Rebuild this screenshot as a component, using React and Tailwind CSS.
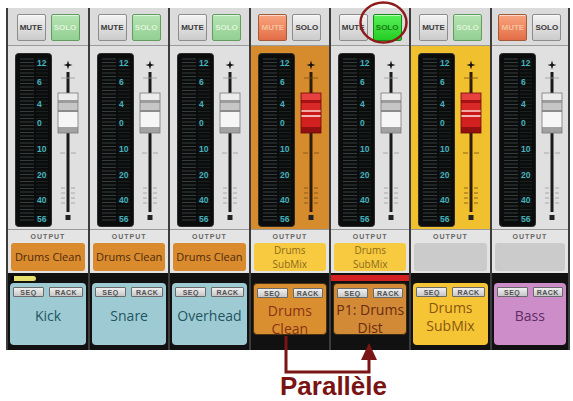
import React from "react";

const channels = [
  { mute: "off", solo: "light", body: "gray", knob: "white", out: "orange", outText: ["Drums Clean"], box: "blue", name: ["Kick"], band: "yellow", nameMt: "mt-[10px]", short: false, first: true },
  { mute: "off", solo: "light", body: "gray", knob: "white", out: "orange", outText: ["Drums Clean"], box: "blue", name: ["Snare"], band: "none", nameMt: "mt-[10px]", short: false },
  { mute: "off", solo: "light", body: "gray", knob: "white", out: "orange", outText: ["Drums Clean"], box: "blue", name: ["Overhead"], band: "none", nameMt: "mt-[10px]", short: false },
  { mute: "on", solo: "off", body: "orange", knob: "red", out: "yellow", outText: ["Drums", "SubMix"], box: "orange", name: ["Drums", "Clean"], band: "none", nameMt: "mt-[4px]", short: true },
  { mute: "off", solo: "on", body: "gray", knob: "white", out: "yellow", outText: ["Drums", "SubMix"], box: "orange2", name: ["P1: Drums", "Dist"], band: "red", nameMt: "mt-[3px]", short: true },
  { mute: "off", solo: "light", body: "yellow", knob: "red", out: "gray", outText: [], box: "yellow", name: ["Drums", "SubMix"], band: "none", nameMt: "mt-[2px]", short: false },
  { mute: "on", solo: "off", body: "gray", knob: "white", out: "gray", outText: [], box: "pink", name: ["Bass"], band: "none", nameMt: "mt-[10px]", short: false, last: true },
];

const BTN =
  "w-[29px] h-[27px] rounded-[2px] border flex items-center justify-center text-[8px] font-bold leading-none shadow-[inset_0_1px_0_rgba(255,255,255,0.6)]";

const muteCls = {
  off: "bg-linear-to-b from-[#f3f3f3] to-[#cbcbcb] border-[#8c8c8c] text-[#3a3a3a]",
  on: "bg-linear-to-b from-[#f7a47f] to-[#e36d46] border-[#a55a3a] text-[#f6c39c]",
};
const soloCls = {
  off: "bg-linear-to-b from-[#f3f3f3] to-[#cbcbcb] border-[#8c8c8c] text-[#3a3a3a]",
  light: "bg-linear-to-b from-[#b6e4b3] to-[#92cf92] border-[#5f9e5f] text-[#e0f4da]",
  on: "bg-linear-to-b from-[#55f255] to-[#22cc22] border-[#168a16] text-[#167a16]",
};
const bodyCls = {
  gray: "bg-[#e0e0e0]",
  orange: "bg-[#d68b2c]",
  yellow: "bg-[#f1c02e]",
};
const outCls = {
  orange: "bg-[#d98b2d] text-[#4e2a0e]",
  yellow: "bg-[#f7ca40] text-[#8d6a1a]",
  gray: "bg-[#cbcbcb]",
};
const boxCls = {
  blue: "bg-[#9ecbd3] text-[#1f5561] h-[62px]",
  orange: "bg-[#d98f30] text-[#8b3212] h-[52px] border border-[#4a3214]",
  orange2: "bg-[#d38a36] text-[#6b2a10] h-[52px] border border-[#3a2a14]",
  yellow: "bg-[#f5c535] text-[#8a5610] h-[62px]",
  pink: "bg-[#cd8dc9] text-[#5f2c63] h-[62px]",
};

function Meter() {
  const labels = [
    [10, "12"],
    [29, "6"],
    [51, "4"],
    [70, "0"],
    [96, "10"],
    [122, "20"],
    [147, "40"],
    [166, "56"],
  ];
  const segs = [];
  for (let y = 6; y < 170; y += 3.5) segs.push(y);
  return (
    <svg width="37" height="174" viewBox="0 0 37 174" className="shrink-0">
      <rect x="0.5" y="0.5" width="36" height="173" rx="3" fill="#0b0d0d" stroke="#2c2c2c" />
      {segs.map((y, i) => (
        <line key={"a" + i} x1="5" x2="19" y1={y} y2={y} stroke="#373c3d" strokeWidth="1" />
      ))}
      {segs.map((y, i) => (
        <line key={"b" + i} x1="21" x2="33" y1={y} y2={y} stroke="#1b2122" strokeWidth="1" />
      ))}
      {labels.map(([y, t]) => (
        <text key={t} x="22" y={y + 3} fontSize="8.5" fill="#46b2bd" fontFamily="Liberation Sans" fontWeight="bold">
          {t}
        </text>
      ))}
    </svg>
  );
}

function Fader({ knob, body }) {
  const track = body === "gray" ? "#1a1a1a" : "#2e1c08";
  const tick = body === "gray" ? "#9a9a9a" : "#7a4e16";
  const white = [
    [40, 7, "#ececec"],
    [47, 3, "#9c9c9c"],
    [50, 7, "#c6c6c6"],
    [57, 2, "#8c8c8c"],
    [59, 15, "#f6f6f6"],
    [74, 6, "#a2a2a2"],
  ];
  const red = [
    [40, 7, "#e64040"],
    [47, 3, "#a51212"],
    [50, 7, "#d82828"],
    [57, 2, "#f3a8a8"],
    [59, 3, "#c81818"],
    [62, 2, "#f5b5b5"],
    [64, 10, "#d02020"],
    [74, 6, "#931010"],
  ];
  const parts = knob === "red" ? red : white;
  return (
    <svg width="27" height="174" viewBox="0 0 27 174" className="shrink-0">
      <path d="M13 7.5 L14 11 L17.5 12 L14 13 L13 16.5 L12 13 L8.5 12 L12 11 Z" fill="#111" />
      <line x1="13" x2="13" y1="19" y2="159" stroke={track} strokeWidth="3" />
      <line x1="6" x2="20" y1="25" y2="25" stroke={tick} strokeWidth="0.8" />
      <line x1="5" x2="10" y1="100" y2="100" stroke={tick} strokeWidth="0.8" />
      <line x1="16" x2="21" y1="100" y2="100" stroke={tick} strokeWidth="0.8" />
      {[135, 140, 145, 150].map((y) => (
        <g key={y}>
          <line x1="6" x2="10" y1={y} y2={y} stroke={tick} strokeWidth="0.8" />
          <line x1="16" x2="20" y1={y} y2={y} stroke={tick} strokeWidth="0.8" />
        </g>
      ))}
      <rect x="10.5" y="162" width="5" height="5" fill="#222" />
      {parts.map(([y, h, c], i) => (
        <rect key={i} x="3" y={y} width="20" height={h} fill={c} />
      ))}
      <rect x="3" y="40" width="20" height="40" fill="none" stroke={knob === "red" ? "#6a0a0a" : "#7a7a7a"} strokeWidth="0.8" />
    </svg>
  );
}

function Channel({ c }) {
  return (
    <div className={`flex flex-col border-l-2 border-[#3c3c3c] ${c.last ? "border-r-2" : ""}`}>
      <div className="h-[37px] bg-[#dbdbdb] flex justify-center gap-[5px] pt-[6px]">
        <div className={`${BTN} ${muteCls[c.mute]}`}>MUTE</div>
        <div className={`${BTN} ${soloCls[c.solo]}`}>SOLO</div>
      </div>
      <div className="h-px bg-[#9a9a9a]" />
      <div className={`h-[183px] ${bodyCls[c.body]} flex pl-[7px] pt-[7px] gap-[3px]`}>
        <Meter />
        <Fader knob={c.knob} body={c.body} />
      </div>
      <div className="h-px bg-[#9a9a9a]" />
      <div className="h-[43px] bg-[#e4e4e4] flex flex-col">
        <div className="h-[13px] pt-[3px] text-center text-[7px] leading-[8px] tracking-[1px] font-bold text-[#666]">
          OUTPUT
        </div>
        <div
          className={`mx-[3px] h-[28px] rounded-[3px] flex flex-col items-center justify-center font-['Open_Sans',sans-serif] ${
            c.outText.length > 1 ? "text-[10px] leading-[14px]" : "text-[11px] leading-[14px]"
          } ${outCls[c.out]}`}
        >
          {c.outText.map((t) => (
            <div key={t}>{t}</div>
          ))}
        </div>
      </div>
      <div className="h-[77px] bg-[#111] flex flex-col">
        <div className="h-[10px] flex items-center">
          {c.band === "yellow" && (
            <div className="ml-[3px] flex items-center h-[5px]">
              <div className="w-[3px] h-[4px] bg-[#000]" />
              <div className="w-[22px] h-[5px] rounded-r-full bg-[#e6df6c]" />
            </div>
          )}
          {c.band === "red" && <div className="w-full h-[6px] bg-[#d42020]" />}
        </div>
        <div className={`mx-[2px] rounded-[4px] flex flex-col ${boxCls[c.box]}`}>
          <div className="flex gap-[5px] px-[3px] pt-[4px]">
            <div className="w-[31px] h-[10px] rounded-[1px] border border-[#6a6a6a] bg-linear-to-b from-[#f0f0f0] to-[#c8c8c8] text-[#505050] text-[7px] font-bold leading-none flex items-center justify-center tracking-[0.5px]">
              SEQ
            </div>
            <div className="flex-1 h-[10px] rounded-[1px] border border-[#6a6a6a] bg-linear-to-b from-[#f0f0f0] to-[#c8c8c8] text-[#505050] text-[7px] font-bold leading-none flex items-center justify-center tracking-[0.5px]">
              RACK
            </div>
          </div>
          <div className={`${c.nameMt} text-center font-['Open_Sans',sans-serif] text-[14px] leading-[18px]`}>
            {c.name.map((n) => (
              <div key={n}>{n}</div>
            ))}
          </div>
        </div>
      </div>
    </div>
  );
}

export default function App() {
  return (
    <div className="relative w-[573px] h-[401px] bg-white overflow-hidden font-['Liberation_Sans',sans-serif]">
      <div className="pl-[6px] pt-[8px]">
        <div className="grid grid-cols-[82px_repeat(6,1fr)] w-[564px]">
          {channels.map((c, i) => (
            <Channel key={i} c={c} />
          ))}
        </div>
      </div>
      <div className="pl-[280px] mt-[23px] text-[26px] leading-[26px] font-bold text-[#7a1313]">Parallèle</div>
      <svg className="absolute left-0 top-0 pointer-events-none" width="573" height="401" viewBox="0 0 573 401">
        <ellipse cx="383.5" cy="22.5" rx="23" ry="20" fill="none" stroke="#8e1b1b" strokeWidth="2.5" />
        <path d="M286 336 V372 H369 V356" fill="none" stroke="#7a1515" strokeWidth="3" />
        <polygon points="369,343 361,360 377,360" fill="#7a1515" />
      </svg>
    </div>
  );
}
